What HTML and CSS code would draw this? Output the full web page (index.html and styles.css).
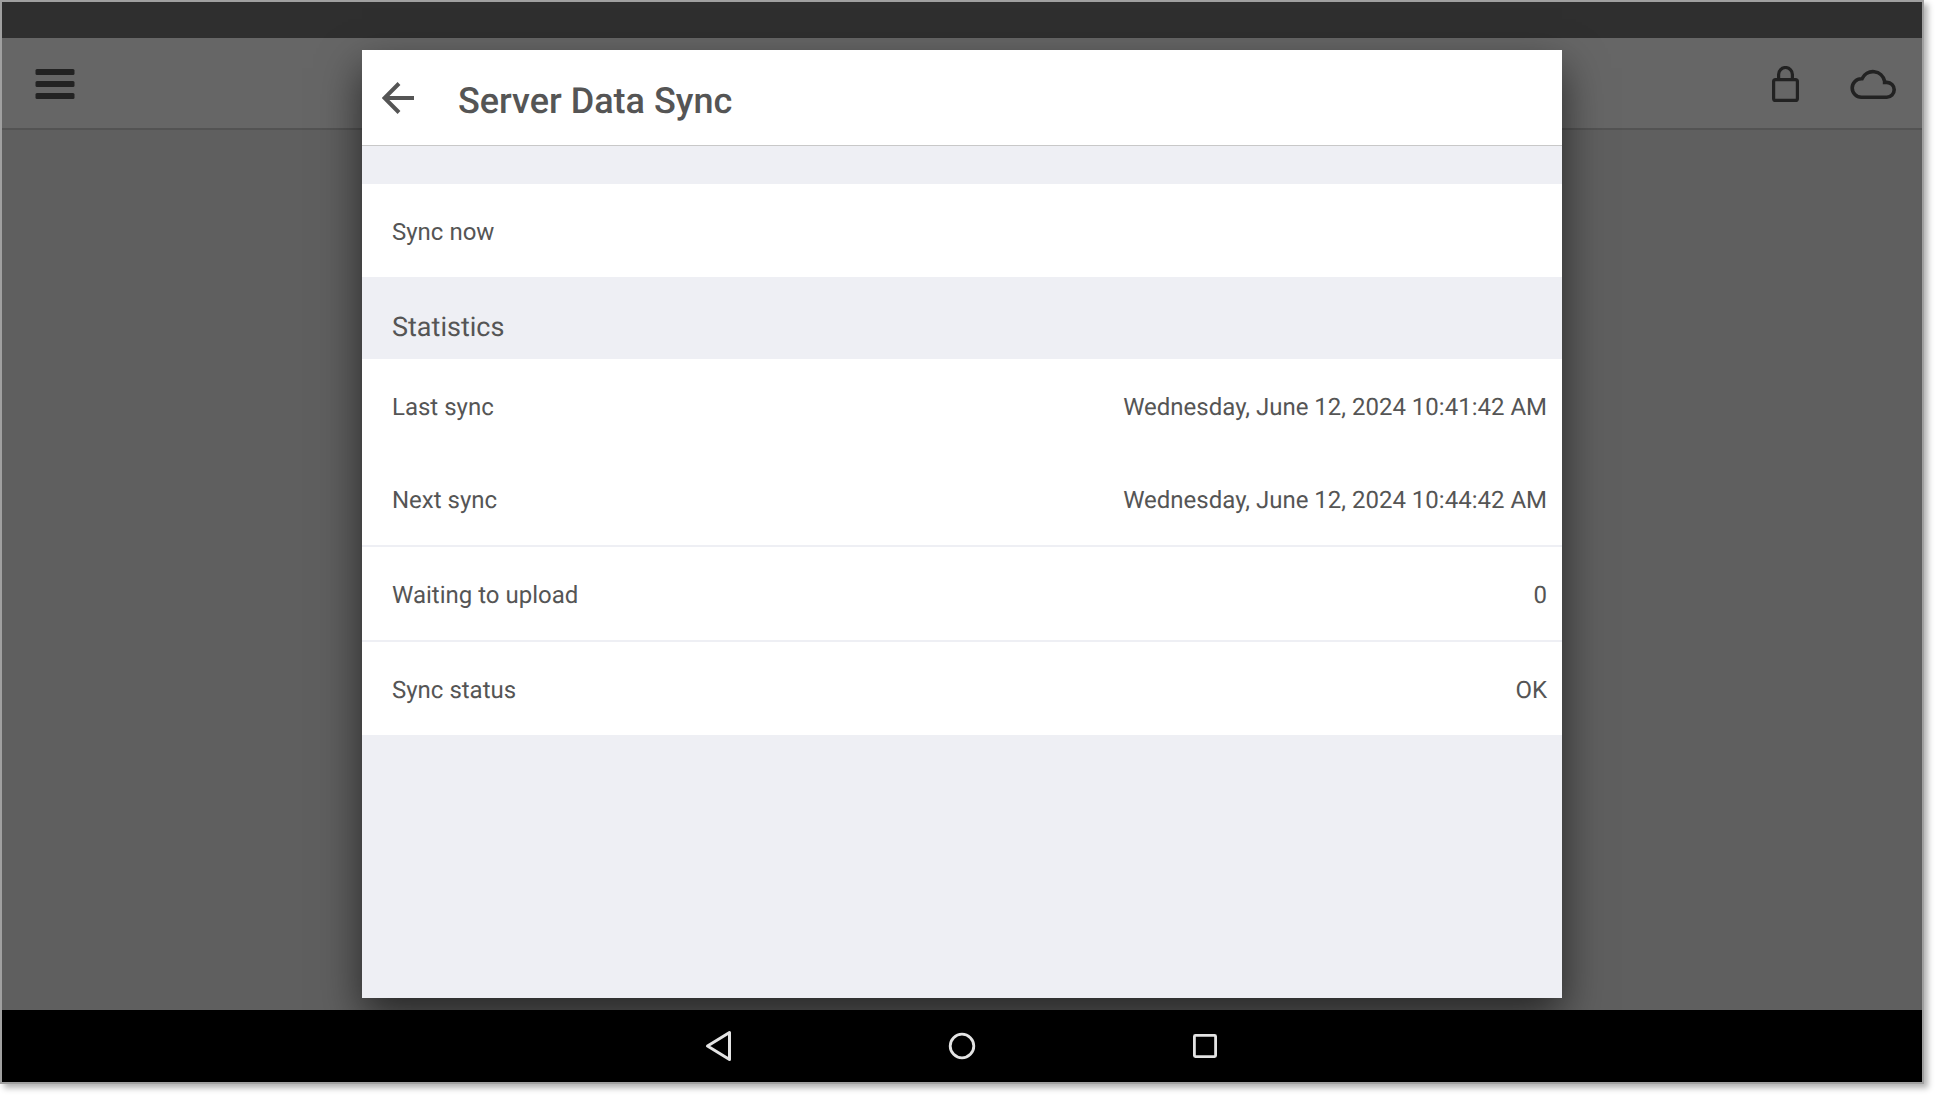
FILE: index.html
```html
<!DOCTYPE html>
<html lang="en">
<head>
<meta charset="utf-8">
<meta name="viewport" content="width=device-width, initial-scale=1">
<title>Server Data Sync</title>
<link rel="stylesheet" href="styles.css">
</head>
<body>
<div class="device">
  <div class="status-bar"></div>
  <div class="stage">
    <div class="app">
      <header class="toolbar">
        <button class="icon-button" type="button" aria-label="Menu">
          <svg width="40" height="30" viewBox="0 0 40 30"><g fill="#222"><rect x="0.5" width="39" height="6" rx="1.5"/><rect x="0.5" y="12" width="39" height="6" rx="1.5"/><rect x="0.5" y="24" width="39" height="6" rx="1.5"/></g></svg>
        </button>
        <div class="toolbar-actions">
          <button class="icon-button" type="button" aria-label="Lock">
            <svg width="27" height="36" viewBox="0 0 27 36" fill="none" stroke="#222" stroke-width="3.2"><rect x="1.6" y="13.6" width="23.8" height="20.8" rx="2"/><path d="M6.6 13.6V8.4a6.9 6.9 0 0 1 13.8 0v5.2"/></svg>
          </button>
          <button class="icon-button" type="button" aria-label="Cloud">
            <svg width="46" height="30" viewBox="0 0 46 30" fill="none" stroke="#222" stroke-width="3.6"><path d="M11.4 28.2h25.4a7.4 7.4 0 0 0 0-14.8h-2.2v-1.2a11.9 11.9 0 0 0-22.6-2.4h-.6a9.2 9.2 0 0 0 0 18.4z"/></svg>
          </button>
        </div>
      </header>
    </div>
    <main class="dialog" role="dialog" aria-labelledby="dialog-title">
      <header class="dialog-header">
        <button class="icon-button" type="button" aria-label="Back">
          <svg width="32" height="32" viewBox="0 0 32 32" fill="none" stroke="#555" stroke-width="4"><path d="M32 16H3M17 1.500L2.500 16L17 30.500"/></svg>
        </button>
        <h1 class="dialog-title" id="dialog-title">Server Data Sync</h1>
      </header>
      <button class="row sync-now" type="button">Sync now</button>
      <h2 class="section-title">Statistics</h2>
      <dl class="stats">
        <div class="row"><dt>Last sync</dt><dd>Wednesday, June 12, 2024 10:41:42 AM</dd></div>
        <div class="row"><dt>Next sync</dt><dd>Wednesday, June 12, 2024 10:44:42 AM</dd></div>
        <div class="row divided"><dt>Waiting to upload</dt><dd>0</dd></div>
        <div class="row divided"><dt>Sync status</dt><dd>OK</dd></div>
      </dl>
    </main>
  </div>
  <nav class="nav-bar" aria-label="System">
    <button class="icon-button" type="button" aria-label="Back">
      <svg width="32" height="32" viewBox="0 0 32 32" fill="none" stroke="#e4e4e4" stroke-width="3" stroke-linejoin="round"><path d="M26.500 2.500v27L4.500 16z"/></svg>
    </button>
    <button class="icon-button" type="button" aria-label="Home">
      <svg width="32" height="32" viewBox="0 0 32 32" fill="none" stroke="#e4e4e4" stroke-width="2.800"><circle cx="16" cy="16" r="11.800"/></svg>
    </button>
    <button class="icon-button" type="button" aria-label="Recent apps">
      <svg width="32" height="32" viewBox="0 0 32 32" fill="none" stroke="#e4e4e4" stroke-width="2.800"><rect x="5.400" y="5.400" width="21.200" height="21.200" rx="1"/></svg>
    </button>
  </nav>
</div>
</body>
</html>
```
FILE: styles.css
```css
*,
*::before,
*::after {
  box-sizing: border-box;
}

body {
  margin: 0;
  background: #fff;
  color: #555;
  font-family: Roboto, "Liberation Sans", sans-serif;
  font-size: 24px;
  line-height: 32px;
  text-rendering: geometricPrecision;
}

svg {
  display: block;
}

.device {
  display: flex;
  flex-direction: column;
  min-height: calc(100vh - 15px);
  margin: 0 15px 15px 0;
  border: 2px solid #a0a0a0;
  background: #5f5f5f;
  box-shadow: 4px 4px 6px rgba(0, 0, 0, 0.3);
}

.status-bar {
  height: 36px;
  background: #2f2f2f;
}

/* The app and the dialog share one grid cell, dialog on top. */
.stage {
  display: grid;
  flex: 1;
}

.app,
.dialog {
  grid-area: 1 / 1;
}

.toolbar {
  display: flex;
  align-items: center;
  justify-content: space-between;
  height: 92px;
  padding: 2px 26px 0 33px;
  border-bottom: 2px solid #535353;
  background: #666;
}

.toolbar-actions {
  display: flex;
  align-items: center;
  gap: 51px;
}

.icon-button {
  padding: 0;
  border: 0;
  background: none;
  cursor: pointer;
}

.dialog {
  justify-self: center;
  width: 62.5%;
  margin: 12px 0;
  background: #eeeff4;
  box-shadow: 0 18px 40px rgba(0, 0, 0, 0.6);
}

.dialog-header {
  display: flex;
  align-items: center;
  gap: 44px;
  height: 96px;
  margin-bottom: 38px;
  padding: 0 20px;
  border-bottom: 1px solid #c8c8c8;
  background: #fff;
}

.dialog-title {
  margin: 0;
  padding-top: 6px;
  font-size: 36px;
  font-weight: 500;
  line-height: 44px;
}

.row {
  display: flex;
  align-items: center;
  justify-content: space-between;
  width: 100%;
  min-height: 93px;
  padding: 2px 15px 0 30px;
  background: #fff;
}

.sync-now {
  border: 0;
  color: inherit;
  font: inherit;
  text-align: left;
  cursor: pointer;
}

.section-title {
  margin: 0;
  padding: 34px 30px 16px;
  font-size: 27px;
  font-weight: 400;
  line-height: 32px;
}

.stats,
.stats dd {
  margin: 0;
}

.divided {
  min-height: 95px;
  border-top: 2px solid #eeeff4;
}

.nav-bar {
  position: relative;
  display: flex;
  align-items: center;
  justify-content: center;
  gap: 211px;
  height: 72px;
  background: #000;
}
```
